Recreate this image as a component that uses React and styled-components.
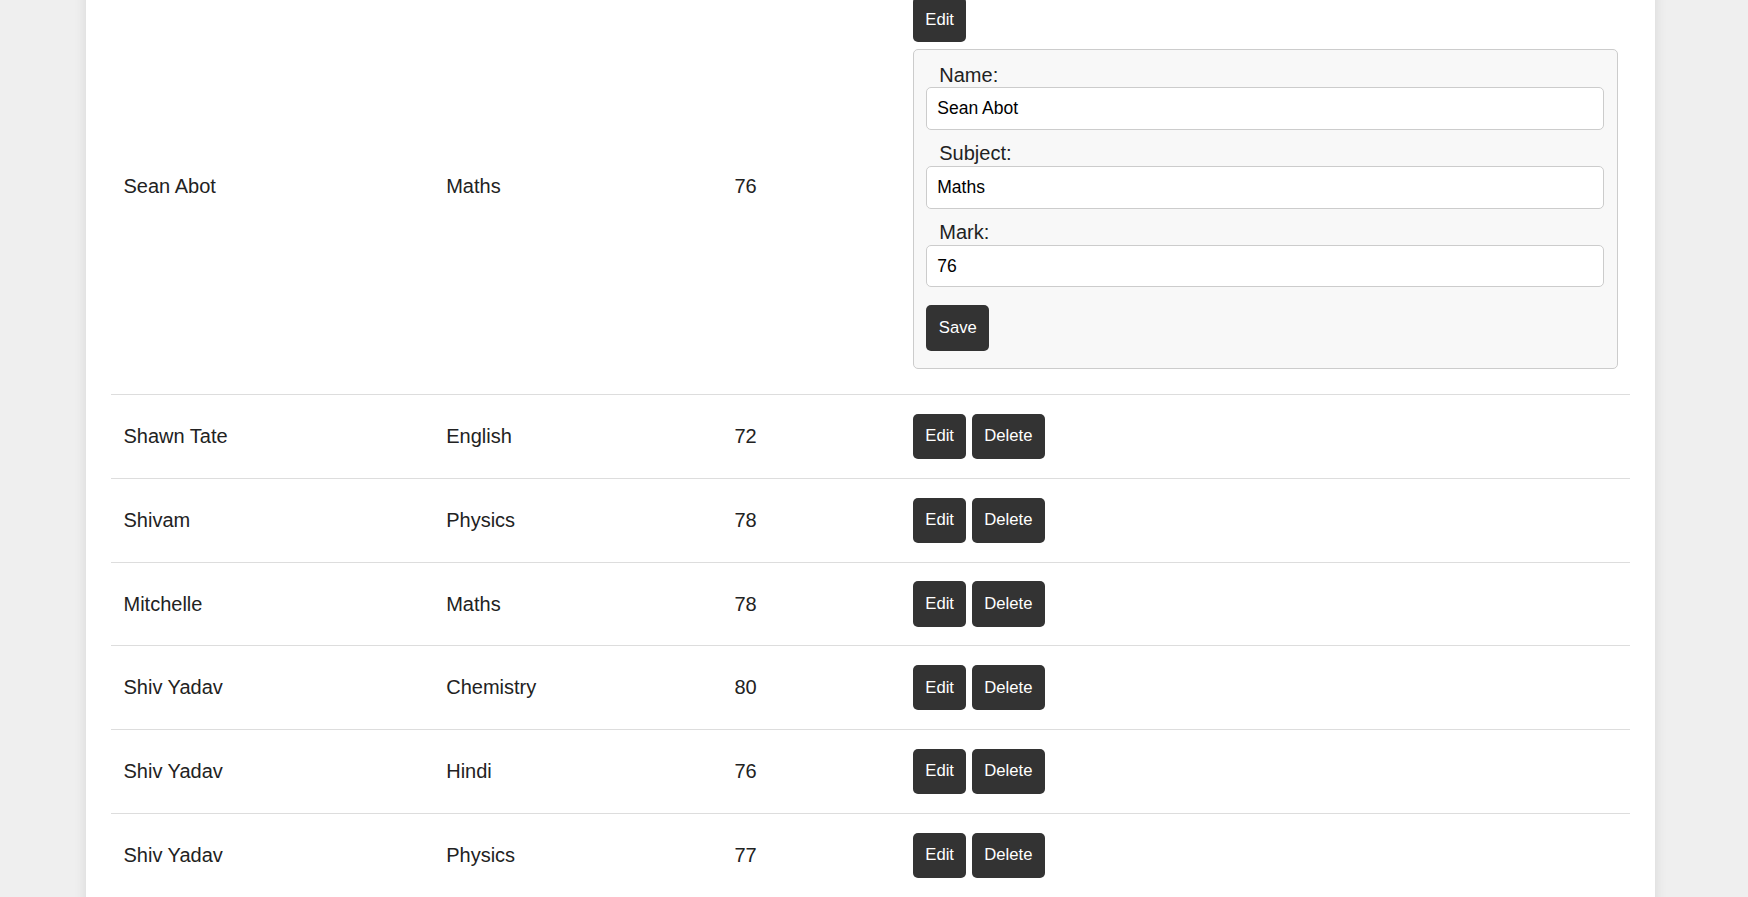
import React from "react";
import styled, { createGlobalStyle } from "styled-components";

const GlobalStyle = createGlobalStyle`
  html, body {
    margin: 0;
    padding: 0;
    background: #efefef;
    font-family: "Liberation Sans", Arial, sans-serif;
    color: #222;
    overflow: hidden;
  }
  * { box-sizing: border-box; }
`;

const Page = styled.div`
  min-height: 100vh;
  background: #efefef;
`;

const Card = styled.div`
  margin: -46.75px 0 0 86px;
  width: 1569px;
  padding: 25px;
  background: #fff;
  box-shadow: 0 0 12px rgba(0, 0, 0, 0.1);
`;

const Table = styled.table`
  width: 100%;
  border-collapse: collapse;
  table-layout: fixed;
  font-size: 20px;
`;

const Cell = styled.td`
  padding: 18.75px 12.5px;
  border-bottom: 1px solid #ddd;
  vertical-align: middle;
  text-align: left;
  line-height: 23px;
`;

const Actions = styled.div`
  display: flex;
  gap: 5.3px;
`;

const Button = styled.button`
  background: #333;
  color: #fff;
  border: none;
  border-radius: 5px;
  padding: 12.5px;
  font-family: "Liberation Sans", Arial, sans-serif;
  font-size: 16.67px;
  line-height: 20.3px;
  cursor: pointer;
`;

const SaveButton = styled(Button)`
  margin: 7.4px 0 4.8px;
`;

const EditForm = styled.div`
  margin: 6.4px 0 6.25px;
  padding: 12px 12.5px 12.5px;
  border: 1px solid #ccc;
  border-radius: 5px;
  background: #f8f8f8;
`;

const Label = styled.label`
  display: block;
  font-size: 20px;
  line-height: 23px;
  padding-top: 2px;
  margin: 0 0 0.8px 13px;
  color: #222;
`;

const Input = styled.input`
  display: block;
  width: 100%;
  height: 42.3px;
  padding: 0 10px;
  margin: 0 0 10.7px;
  font-family: "Liberation Sans", Arial, sans-serif;
  font-size: 17.5px;
  color: #000;
  background: #fff;
  border: 1px solid #ccc;
  border-radius: 5px;
  outline: none;
`;

const rows = [
  { name: "Sean Abot", subject: "Maths", mark: 76, editing: true },
  { name: "Shawn Tate", subject: "English", mark: 72 },
  { name: "Shivam", subject: "Physics", mark: 78 },
  { name: "Mitchelle", subject: "Maths", mark: 78 },
  { name: "Shiv Yadav", subject: "Chemistry", mark: 80 },
  { name: "Shiv Yadav", subject: "Hindi", mark: 76 },
  { name: "Shiv Yadav", subject: "Physics", mark: 77 },
];

function Row({ row }) {
  return (
    <tr>
      <Cell>{row.name}</Cell>
      <Cell>{row.subject}</Cell>
      <Cell>{row.mark}</Cell>
      <Cell>
        <Actions>
          <Button>Edit</Button>
          {!row.editing && <Button>Delete</Button>}
        </Actions>
        {row.editing && (
          <EditForm>
            <Label>Name:</Label>
            <Input defaultValue={row.name} />
            <Label>Subject:</Label>
            <Input defaultValue={row.subject} />
            <Label>Mark:</Label>
            <Input defaultValue={String(row.mark)} />
            <SaveButton>Save</SaveButton>
          </EditForm>
        )}
      </Cell>
    </tr>
  );
}

export default function App() {
  return (
    <Page>
      <GlobalStyle />
      <Card>
        <Table>
          <colgroup>
            <col style={{ width: "322.7px" }} />
            <col style={{ width: "288.3px" }} />
            <col style={{ width: "178.3px" }} />
            <col />
          </colgroup>
          <tbody>
            {rows.map((r, i) => (
              <Row key={i} row={r} />
            ))}
          </tbody>
        </Table>
      </Card>
    </Page>
  );
}
